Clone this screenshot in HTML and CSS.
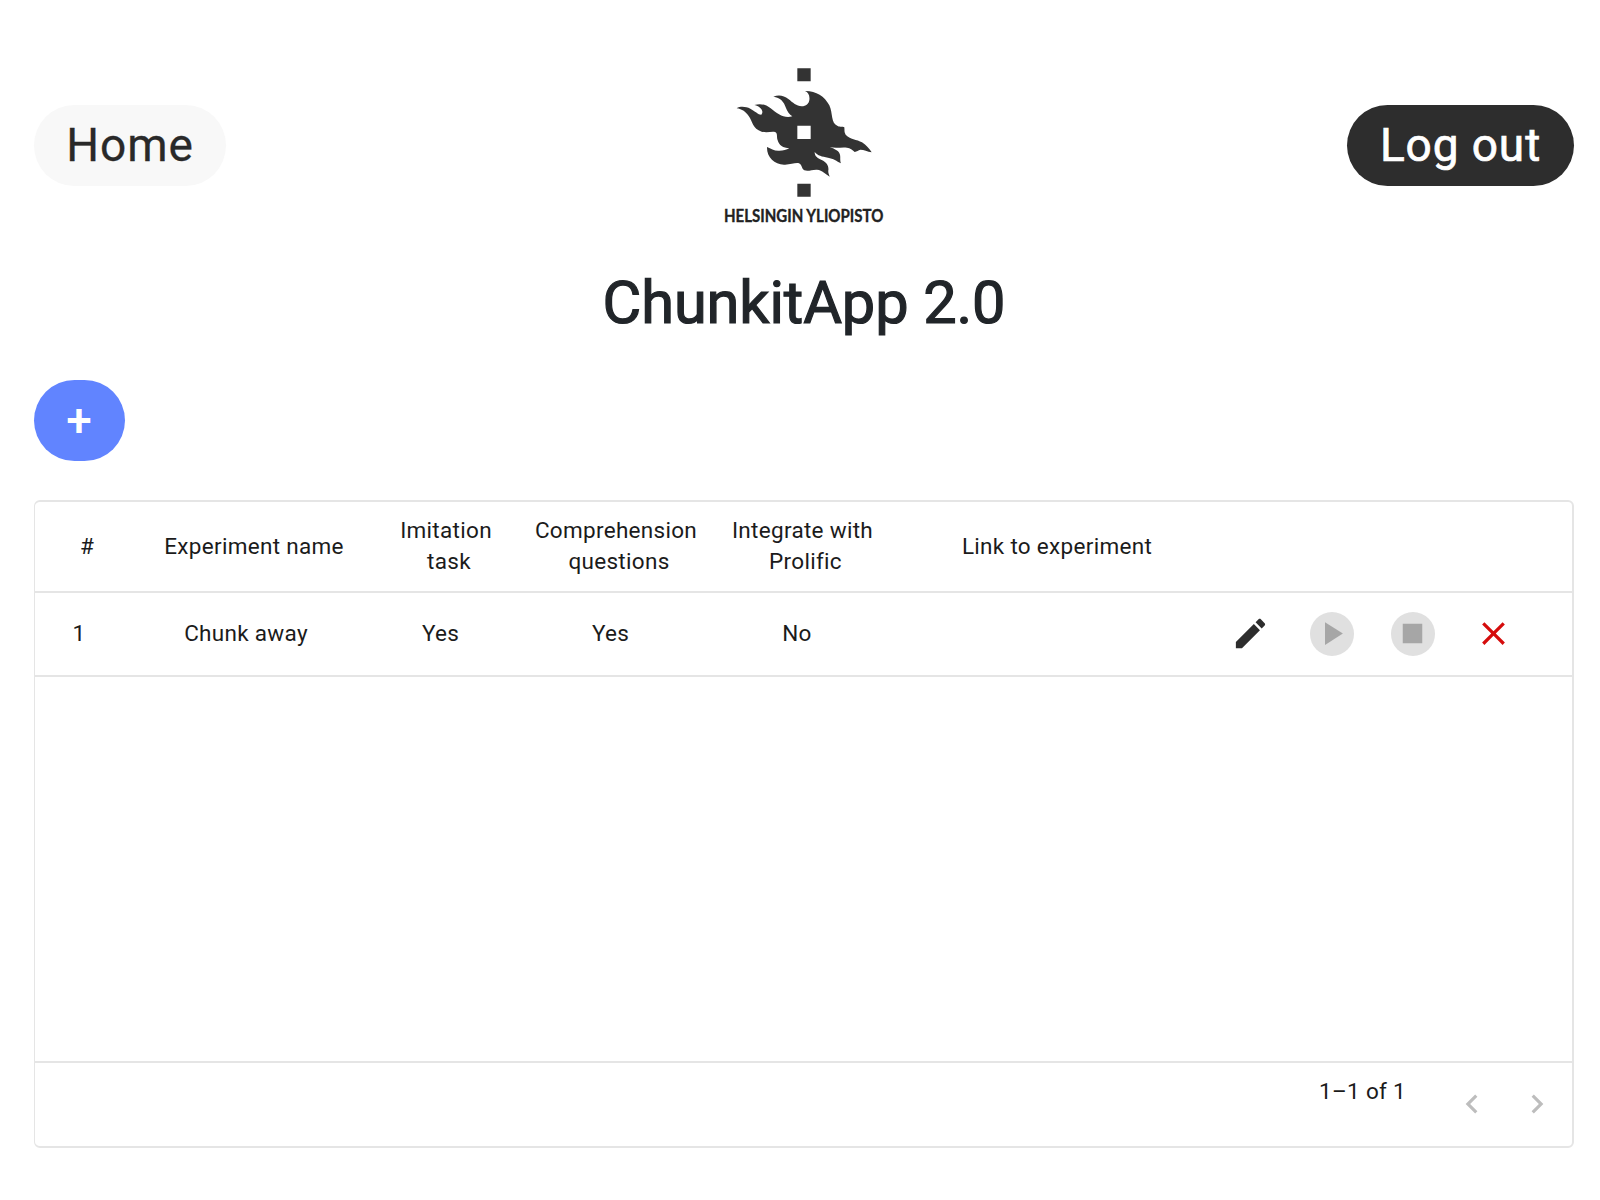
FILE: index.html
```html
<!DOCTYPE html>
<html lang="en">
<head>
<meta charset="utf-8">
<title>ChunkitApp 2.0</title>
<link rel="stylesheet" href="styles.css">
</head>
<body>
<header class="topbar">
  <button class="btn btn-light">Home</button>
  <svg class="logo" viewBox="0 0 570 540" role="img" aria-label="Helsingin yliopisto">
    <path fill="#333" d="M262 40h40v39h-40zM262 386h40v39h-40z"/>
    <path fill="#333" fill-rule="evenodd" d="M80 160C91 153 108 155 121 161C135 168 146 180 154 179C160 172 157 164 150 158C144 153 137 151 133 150C152 144 168 149 181 159C203 177 222 191 247 184C238 178 232 171 227 157C222 141 211 127 190 125C207 118 222 122 235 132C249 143 259 153 275 154C288 154 297 146 298 135C300 122 295 112 285 108C316 107 344 123 358 151C369 174 362 205 383 213C391 217 397 213 403 217C404 226 402 232 407 239C419 253 441 253 456 262C469 270 478 281 485 292C472 290 462 284 451 284C445 286 441 289 434 291C427 284 421 279 411 278C394 276 377 281 359 276C376 283 387 287 390 299C392 308 389 316 393 325C379 318 371 311 354 308C336 305 323 302 314 291C314 304 322 309 335 315C350 322 357 333 355 346C354 353 357 359 359 365C345 356 338 346 321 344C307 343 296 350 283 346C274 342 277 329 267 325C256 322 241 330 222 329C193 327 170 306 171 276C184 282 193 288 208 287C220 287 229 284 238 280C219 279 207 271 203 256C199 244 204 235 195 231C184 229 171 234 155 230C127 221 128 199 116 183C108 171 96 162 80 160ZM262 212V252H302V212Z"/>
    <text class="logo-name" x="42" y="500" textLength="478" lengthAdjust="spacingAndGlyphs">HELSINGIN YLIOPISTO</text>
  </svg>
  <button class="btn btn-dark">Log out</button>
</header>
<h1 class="title">ChunkitApp 2.0</h1>
<button class="btn btn-add">+</button>
<main class="grid">
  <div class="row head">
    <div class="cell"><span>#</span></div>
    <div class="cell"><span>Experiment name</span></div>
    <div class="cell tight"><span>Imitation</span><span class="second">task</span></div>
    <div class="cell tight"><span>Comprehension</span><span class="second">questions</span></div>
    <div class="cell tight"><span>Integrate with</span><span class="second">Prolific</span></div>
    <div class="cell"><span>Link to experiment</span></div>
  </div>
  <div class="row item">
    <div class="cell"><span>1</span></div>
    <div class="cell"><span>Chunk away</span></div>
    <div class="cell"><span>Yes</span></div>
    <div class="cell"><span>Yes</span></div>
    <div class="cell"><span>No</span></div>
    <div class="cell"></div>
    <div class="actions">
      <i class="action edit"><svg viewBox="0 0 24 24"><path d="M3 17.25V21h3.75L17.81 9.94l-3.75-3.75L3 17.25zM20.71 7.04c.39-.39.39-1.02 0-1.41l-2.34-2.34c-.39-.39-1.02-.39-1.41 0l-1.83 1.83 3.75 3.75 1.83-1.83z"/></svg></i>
      <i class="action disabled"><svg viewBox="0 0 24 24"><path d="M8 5v14l11-7z"/></svg></i>
      <i class="action disabled"><svg viewBox="0 0 24 24"><path d="M6 6h12v12H6z"/></svg></i>
      <i class="action delete"><svg viewBox="0 0 24 24"><path d="M19 6.41L17.59 5 12 10.59 6.41 5 5 6.41 10.59 12 5 17.59 6.41 19 12 13.41 17.59 19 19 17.59 13.41 12z"/></svg></i>
    </div>
  </div>
  <div class="empty"></div>
  <footer class="pager">
    <span class="count">1–1 of 1</span>
    <svg class="chev" viewBox="0 0 24 24"><path d="M15.41 7.41L14 6l-6 6 6 6 1.41-1.41L10.83 12z"/></svg>
    <svg class="chev" viewBox="0 0 24 24"><path d="M10 6L8.59 7.41 13.17 12l-4.58 4.59L10 18l6-6z"/></svg>
  </footer>
</main>
</body>
</html>
```
FILE: styles.css
```css
* { box-sizing: border-box; }
body {
  margin: 0;
  padding: 55px 26px 0 34px;
  min-height: 1200px;
  background: #fff;
  color: #1b1b1b;
  font-family: Roboto, sans-serif;
}
.topbar {
  display: grid;
  grid-template-columns: 676px 190px 1fr;
  align-items: center;
  height: 180px;
}
.btn {
  height: 81px;
  border: 0;
  border-radius: 41px;
  padding: 0;
  font: 400 46px/81px Roboto, sans-serif;
  letter-spacing: .9px;
}
.btn-light { width: 192px; background: #f8f8f8; color: #292929; -webkit-text-stroke: .3px; }
.btn-dark { width: 227px; justify-self: end; background: #2d2d2d; color: #fff; -webkit-text-stroke: .7px; }
.btn-add { display: block; width: 91px; margin-top: 30px; background: #6184ff; color: #fff; font-weight: 500; }
.logo { width: 190px; height: 180px; }
.logo-name { font: 700 49px Lato, sans-serif; fill: #222; stroke: #222; stroke-width: 1px; }
.title {
  margin: 30px 0 0;
  height: 85px;
  text-align: center;
  font-size: 59.5px;
  line-height: 77px;
  font-weight: 400;
  letter-spacing: -.1px;
  -webkit-text-stroke: 1.2px;
  color: #212529;
}
.grid {
  margin-top: 39px;
  height: 648px;
  border: 2px solid #e5e5e5;
  border-left-width: 1px;
  border-radius: 6px;
  display: flex;
  flex-direction: column;
  font-size: 22.5px;
  line-height: 30.7px;
  letter-spacing: .3px;
}
.row {
  display: grid;
  grid-template-columns: 88px 246px 143px 197px 176px 328px 1fr;
  border-bottom: 2px solid #e5e5e5;
}
.head { height: 91px; }
.item { height: 84px; }
.cell { display: flex; flex-direction: column; align-items: center; justify-content: center; padding-bottom: 1px; }
.head .cell { padding-left: 16px; }
.head .tight { padding-left: 11px; padding-bottom: 2px; }
.second { padding-left: 6px; }
.actions { display: flex; align-items: center; gap: 37px; padding-left: 16px; }
.action { display: flex; align-items: center; justify-content: center; width: 44px; height: 44px; border-radius: 50%; }
.action svg { width: 39px; height: 39px; margin: 0 1px 1px 0; fill: #2d2d2d; flex: none; }
.disabled { background: #e0e0e0; }
.disabled svg { fill: #a6a6a6; }
.delete svg { fill: #d50c0c; }
.empty { flex: 1; }
.pager { height: 85px; border-top: 2px solid #e5e5e5; display: flex; justify-content: flex-end; padding: 13px 16px 0 0; }
.count { margin-right: 47px; }
.chev { width: 38px; height: 38px; margin-top: 9px; fill: #bdbdbd; }
.chev + .chev { margin-left: 27px; }
```
